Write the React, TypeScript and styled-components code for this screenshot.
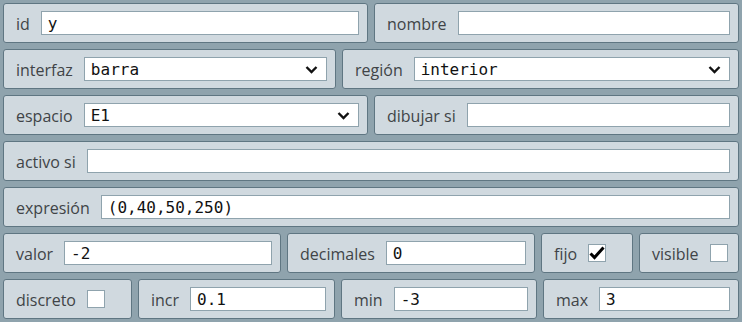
import React from 'react';
import styled, {createGlobalStyle} from 'styled-components';

const GlobalStyle = createGlobalStyle`
    html, body {
        margin: 0;
        padding: 0;
        background: #8fa3ad;
    }
`;

const Editor = styled.div`
    display: flex;
    flex-direction: column;
    gap: 6px;
    padding: 3px;
    width: 742px;
    height: 322px;
    box-sizing: border-box;
    background: #8fa3ad;
    font-family: 'Open Sans', 'Noto Sans', sans-serif;
`;

const Row = styled.div`
    display: flex;
    gap: 6px;
    height: 40px;
`;

const Field = styled.label<{w?: number}>`
    display: flex;
    align-items: center;
    gap: 11px;
    box-sizing: border-box;
    min-width: 0;
    height: 40px;
    padding: 0 8px 0 12px;
    background: #d0d9df;
    border: 1px solid #5f7682;
    border-radius: 3px;
    ${({w}) => (w ? `width: ${w}px; flex: none;` : 'flex: 1;')}
`;

const Label = styled.span`
    font-size: 16px;
    color: #404447;
    white-space: nowrap;
    padding-top: 2px;
`;

const TextBox = styled.input`
    flex: 1;
    min-width: 0;
    width: 0;
    height: 24px;
    box-sizing: border-box;
    border: 1px solid #8fa3ad;
    background: #fff;
    padding: 0 6px;
    font: 16px 'DejaVu Sans Mono', 'Liberation Mono', monospace;
    color: #111;
    outline: none;
`;

const SelectBox = styled.div`
    flex: 1;
    display: flex;
    align-items: center;
    justify-content: space-between;
    height: 24px;
    box-sizing: border-box;
    border: 1px solid #8fa3ad;
    background: #fff;
    padding: 0 8px 0 6px;
    font: 16px 'DejaVu Sans Mono', 'Liberation Mono', monospace;
    color: #111;
`;

const Check = styled.span`
    display: inline-flex;
    align-items: center;
    justify-content: center;
    width: 18px;
    height: 18px;
    box-sizing: border-box;
    border: 1px solid #8fa3ad;
    background: #fff;
`;

const Chevron = () => (
    <svg width="13" height="9" viewBox="0 0 13 9">
        <path d="M1.5 2 L6.5 7 L11.5 2" fill="none" stroke="#111" strokeWidth="2.4" />
    </svg>
);

const Tick = () => (
    <svg width="16" height="14" viewBox="0 0 16 14">
        <path d="M1.5 7.5 L5.5 11.5 L14.5 1.5" fill="none" stroke="#000" strokeWidth="3" />
    </svg>
);

const Text = ({label, value, w}: {label: string; value?: string; w?: number}) => (
    <Field w={w}>
        <Label>{label}</Label>
        <TextBox defaultValue={value ?? ''} />
    </Field>
);

const Select = ({label, value, w}: {label: string; value: string; w?: number}) => (
    <Field w={w}>
        <Label>{label}</Label>
        <SelectBox>
            <span>{value}</span>
            <Chevron />
        </SelectBox>
    </Field>
);

const Checkbox = ({label, checked, w}: {label: string; checked?: boolean; w?: number}) => (
    <Field w={w}>
        <Label>{label}</Label>
        <Check>{checked && <Tick />}</Check>
    </Field>
);

const App: React.FC = () => {
    return (
        <>
            <GlobalStyle />
            <Editor>
                <Row>
                    <Text label="id" value="y" />
                    <Text label="nombre" />
                </Row>
                <Row>
                    <Select label="interfaz" value="barra" w={333} />
                    <Select label="región" value="interior" />
                </Row>
                <Row>
                    <Select label="espacio" value="E1" w={365} />
                    <Text label="dibujar si" />
                </Row>
                <Row>
                    <Text label="activo si" />
                </Row>
                <Row>
                    <Text label="expresión" value="(0,40,50,250)" />
                </Row>
                <Row>
                    <Text label="valor" value="-2" w={278} />
                    <Text label="decimales" value="0" w={248} />
                    <Checkbox label="fijo" checked w={92} />
                    <Checkbox label="visible" />
                </Row>
                <Row>
                    <Checkbox label="discreto" w={129} />
                    <Text label="incr" value="0.1" w={197} />
                    <Text label="min" value="-3" w={196} />
                    <Text label="max" value="3" />
                </Row>
            </Editor>
        </>
    );
};

export default App;
